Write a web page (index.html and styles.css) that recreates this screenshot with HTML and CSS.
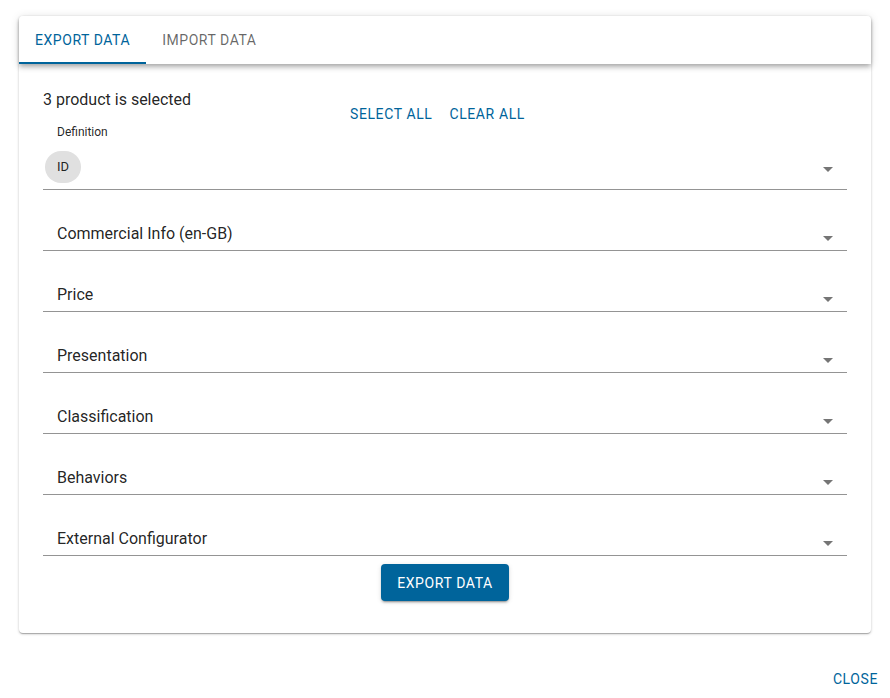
FILE: index.html
```html
<!DOCTYPE html>
<html lang="en">
<head>
<meta charset="utf-8">
<title>Export data</title>
<link rel="stylesheet" href="styles.css">
</head>
<body>
<div class="page">
  <div class="card">
    <div class="tabs">
      <div class="tab active">EXPORT DATA</div>
      <div class="tab">IMPORT DATA</div>
    </div>
    <div class="content">
      <div class="header">
        <div class="header-left">
          <div class="count">3 product is selected</div>
          <div class="label">Definition</div>
        </div>
        <div class="header-actions">
          <button class="text-btn">SELECT ALL</button>
          <button class="text-btn">CLEAR ALL</button>
        </div>
      </div>
      <div class="field first">
        <div class="field-value"><span class="chip">ID</span></div>
        <svg class="arrow" viewBox="7 10 10 5" width="10" height="5"><path d="M7 10l5 5 5-5z"/></svg>
      </div>
      <div class="field">
        <div class="field-value">Commercial Info (en-GB)</div>
        <svg class="arrow" viewBox="7 10 10 5" width="10" height="5"><path d="M7 10l5 5 5-5z"/></svg>
      </div>
      <div class="field">
        <div class="field-value">Price</div>
        <svg class="arrow" viewBox="7 10 10 5" width="10" height="5"><path d="M7 10l5 5 5-5z"/></svg>
      </div>
      <div class="field">
        <div class="field-value">Presentation</div>
        <svg class="arrow" viewBox="7 10 10 5" width="10" height="5"><path d="M7 10l5 5 5-5z"/></svg>
      </div>
      <div class="field">
        <div class="field-value">Classification</div>
        <svg class="arrow" viewBox="7 10 10 5" width="10" height="5"><path d="M7 10l5 5 5-5z"/></svg>
      </div>
      <div class="field">
        <div class="field-value">Behaviors</div>
        <svg class="arrow" viewBox="7 10 10 5" width="10" height="5"><path d="M7 10l5 5 5-5z"/></svg>
      </div>
      <div class="field">
        <div class="field-value">External Configurator</div>
        <svg class="arrow" viewBox="7 10 10 5" width="10" height="5"><path d="M7 10l5 5 5-5z"/></svg>
      </div>
      <div class="actions">
        <button class="primary-btn">EXPORT DATA</button>
      </div>
    </div>
  </div>
  <div class="footer">
    <button class="text-btn close">CLOSE</button>
  </div>
</div>
</body>
</html>
```
FILE: styles.css
```css
* { box-sizing: border-box; }
html, body { margin: 0; padding: 0; background: #fff; }
body {
  font-family: Roboto, "Liberation Sans", Arial, sans-serif;
  color: rgba(0, 0, 0, 0.87);
  width: 890px;
  height: 698px;
  overflow: hidden;
}
.page {
  display: flex;
  flex-direction: column;
  padding: 16px 4px 0 19px;
}
.card {
  width: 852px;
  background: #fff;
  border-radius: 4px;
  box-shadow: 0 1px 3px rgba(0,0,0,0.2), 0 1px 1px rgba(0,0,0,0.14), 0 2px 1px -1px rgba(0,0,0,0.12);
}
.tabs {
  display: flex;
  height: 48px;
  border-radius: 4px 4px 0 0;
  background: #fff;
  box-shadow: 0 2px 4px -1px rgba(0,0,0,0.2), 0 4px 5px 0 rgba(0,0,0,0.14), 0 1px 10px 0 rgba(0,0,0,0.12);
  position: relative;
}
.tab {
  height: 48px;
  padding: 2px 16px 0 16px;
  display: flex;
  align-items: center;
  font-size: 14px;
  letter-spacing: 0.55px;
  color: rgba(0,0,0,0.6);
  border-bottom: 2px solid transparent;
}
.tab.active {
  color: #00649b;
  border-bottom-color: #00649b;
}
.content {
  padding: 24px 24px 32px 24px;
}
.header {
  display: flex;
  align-items: flex-start;
}
.header-left {
  width: 299px;
}
.count {
  font-size: 16px;
  line-height: 24px;
}
.label {
  margin-top: 13px;
  padding-left: 14px;
  font-size: 12px;
  line-height: 14px;
}
.header-actions {
  display: flex;
  gap: 1px;
  margin-top: 8px;
}
.text-btn {
  background: none;
  border: 0;
  font-family: inherit;
  font-size: 14px;
  letter-spacing: 0.6px;
  color: #00649b;
  height: 36px;
  padding: 0 8px;
  min-width: 64px;
  cursor: pointer;
}
.field {
  display: flex;
  align-items: center;
  margin-top: 32px;
  padding: 0 0 4px 14px;
  border-bottom: 1px solid #949494;
}
.field.first {
  margin-top: 12px;
  padding: 0 0 6px 2px;
}
.field-value {
  flex: 1;
  font-size: 16px;
  line-height: 24px;
  height: 24px;
}
.field.first .field-value {
  height: 32px;
}
.arrow {
  fill: #757575;
  margin-top: 8px;
  margin-right: 14px;
  flex: none;
}
.field.first .arrow {
  margin-top: 5px;
}
.chip {
  display: inline-flex;
  align-items: center;
  height: 32px;
  padding: 0 12px;
  border-radius: 16px;
  background: #e0e0e0;
  font-size: 13px;
  vertical-align: top;
}
.actions {
  display: flex;
  justify-content: center;
  margin-top: 8px;
}
.primary-btn {
  background: #00649b;
  color: #fff;
  border: 0;
  border-radius: 4px;
  height: 37px;
  padding: 0 16px;
  font-family: inherit;
  font-size: 14px;
  letter-spacing: 0.6px;
  box-shadow: 0 3px 1px -2px rgba(0,0,0,0.2), 0 2px 2px 0 rgba(0,0,0,0.14), 0 1px 5px 0 rgba(0,0,0,0.12);
}
.footer {
  display: flex;
  justify-content: flex-end;
  margin-top: 28px;
}
.close {
  min-width: 0;
}
```
